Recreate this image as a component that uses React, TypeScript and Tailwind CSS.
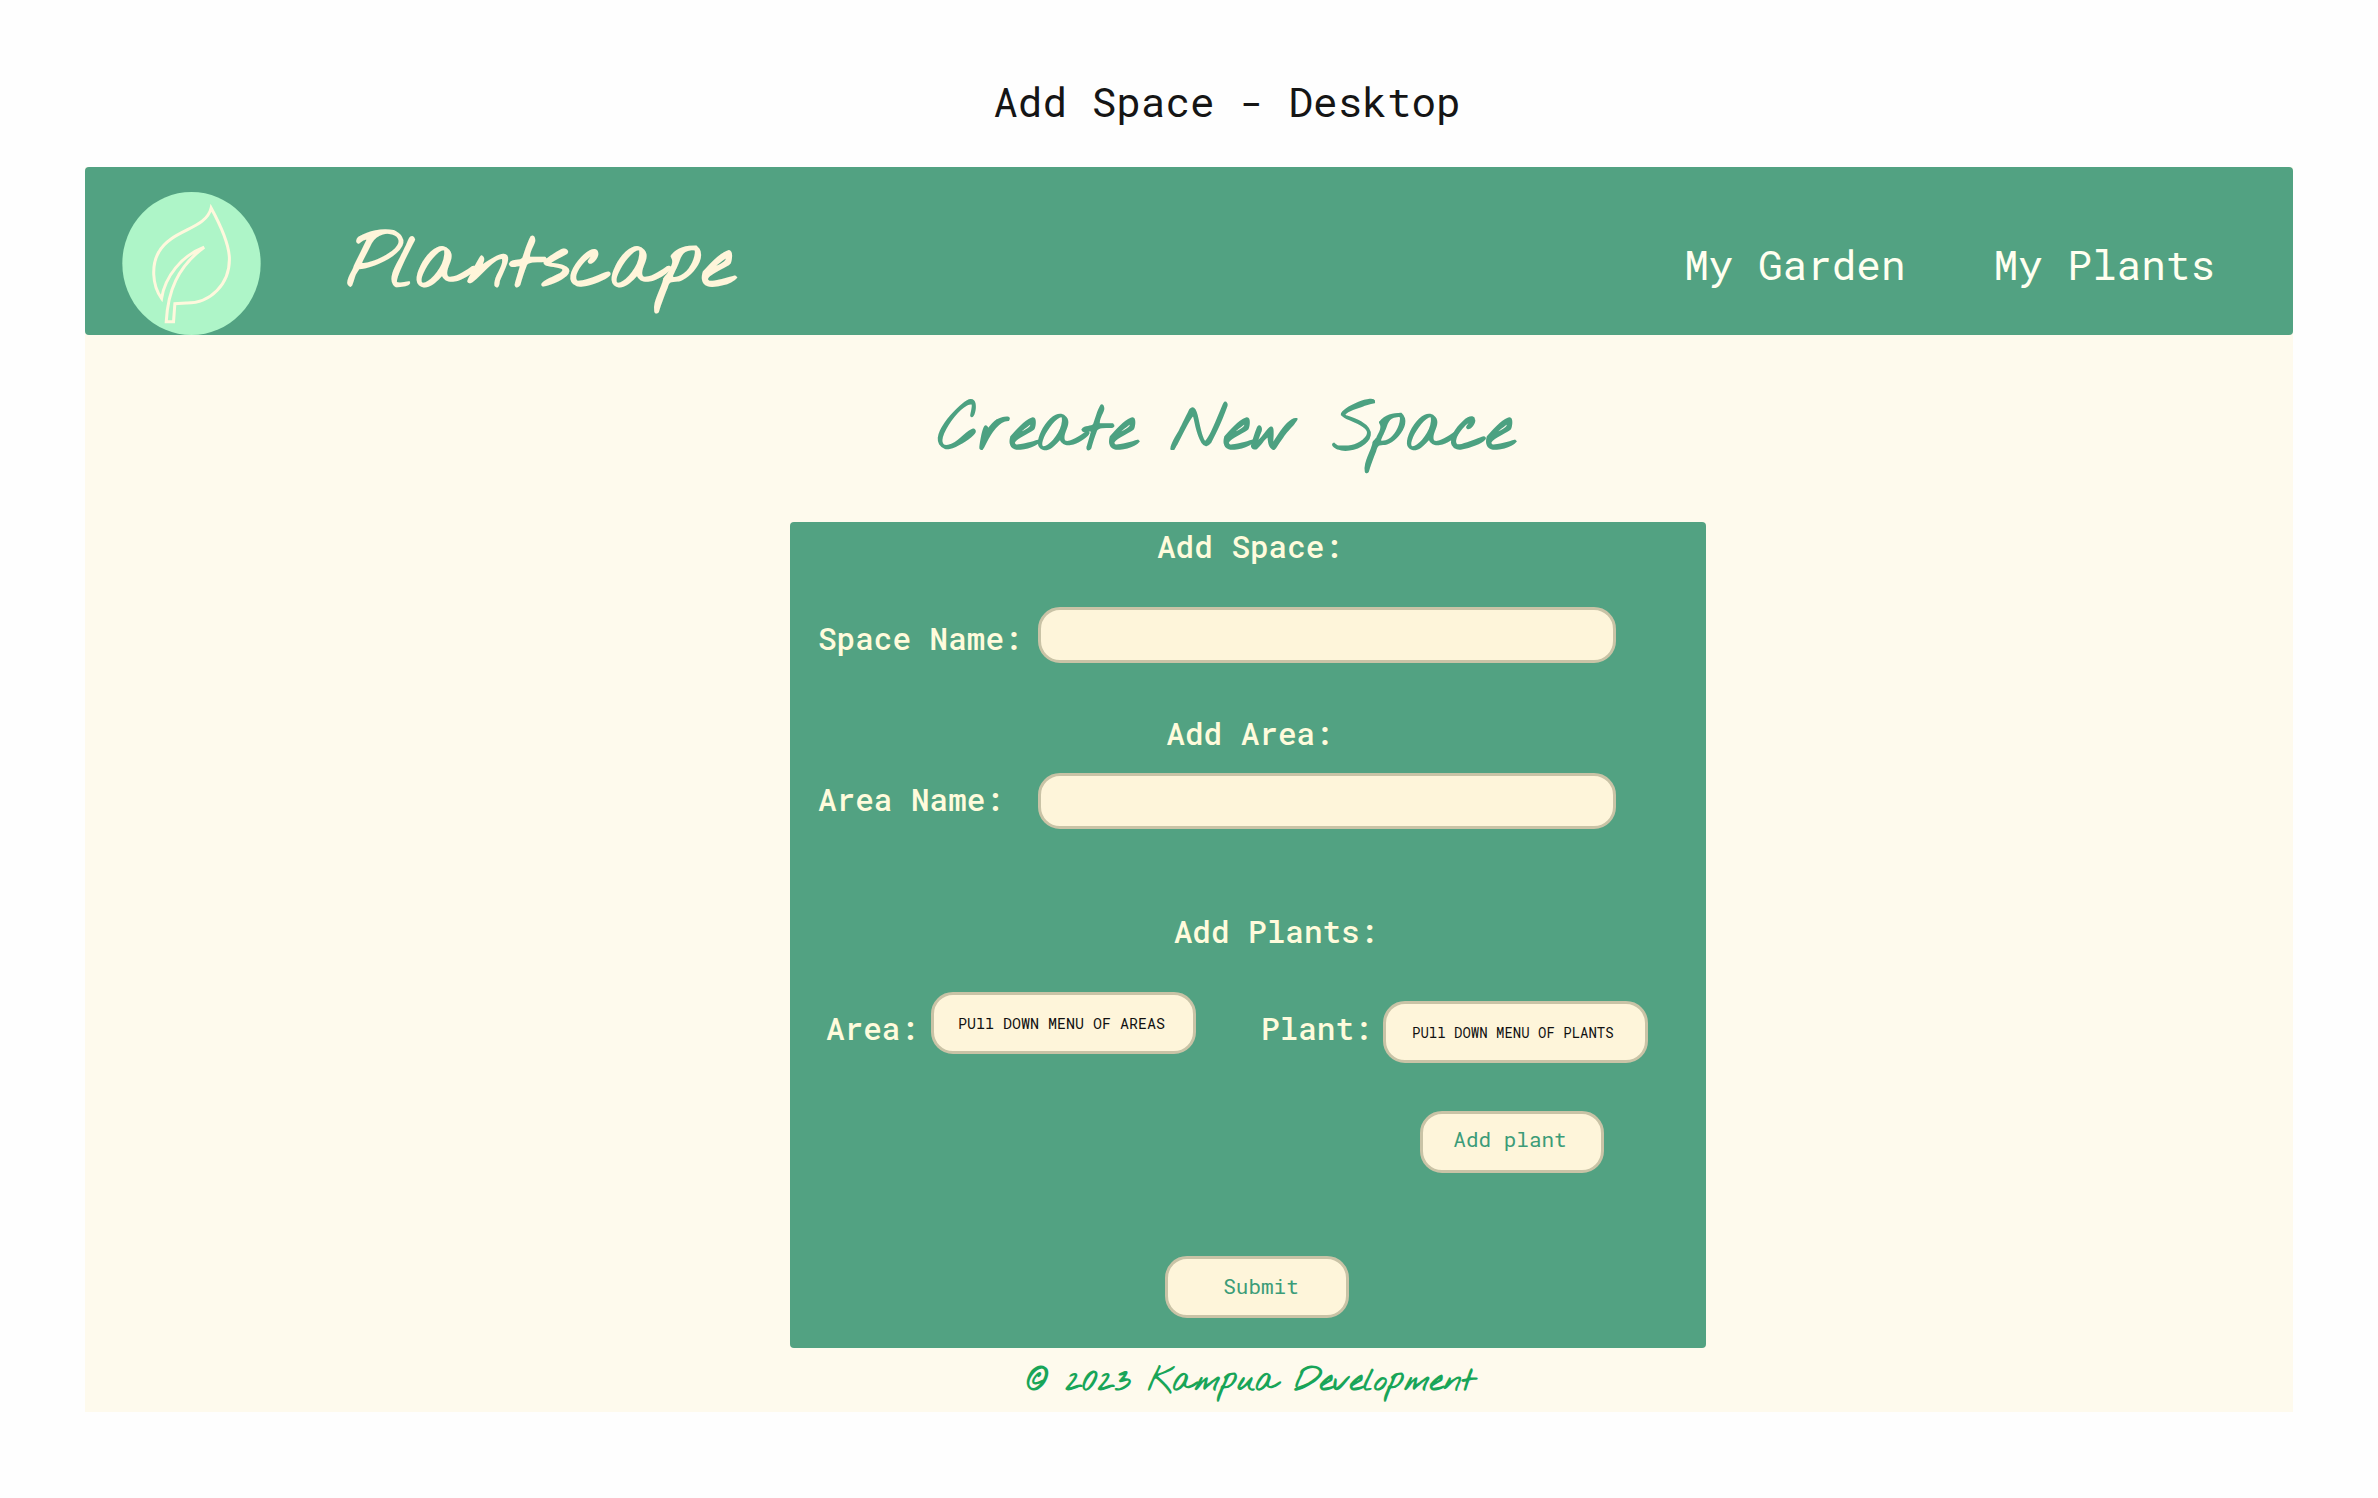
import React from "react";

const mono = "font-['Roboto_Mono','DejaVu_Sans_Mono',monospace]";
const script = "font-['Nothing_You_Could_Do','Caveat','Lato',cursive]";
const field = "rounded-[22px] border-3 border-[#c9c3a6] bg-[#fef5da]";
const label = "shrink-0 text-[31px] leading-9 font-medium";

function Logo() {
  return (
    <svg viewBox="36 36 416 430" className="h-[143px] w-[139px] shrink-0" role="img" aria-label="Leaf logo">
      <ellipse cx="244" cy="251" rx="208" ry="215" fill="#aef5c8" />
      <path
        d="M303 84C327 128 358 188 358 238C358 312 302 371 228 370L194 372L190 426L168 426C173 335 201 262 282 202C214 227 164 291 154 356C124 315 124 252 146 216C184 148 288 149 303 84Z"
        fill="none"
        stroke="#fff8dd"
        strokeWidth="9"
      />
    </svg>
  );
}

function TextRow({ id, text, labelPad }: { id: string; text: string; labelPad: string }) {
  return (
    <div className="flex items-center pr-[90px] pl-7">
      <label htmlFor={id} className={`${label} w-[220px] ${labelPad}`}>
        {text}
      </label>
      <input id={id} type="text" className={`${field} h-14 min-w-0 flex-1 px-5 text-xl text-[#111]`} />
    </div>
  );
}

export default function App() {
  return (
    <div className={`${mono} min-h-screen bg-[#fefefe] px-[85px] pb-[86px]`}>
      <h2 className="pt-[75px] pb-10 pl-[76px] text-center text-[41px] leading-[52px] text-[#151515]">
        Add Space - Desktop
      </h2>
      <div className="bg-[#fefaed]">
        <header className="flex h-[168px] items-end rounded bg-[#52a282] pr-[78px] pl-[37px]">
          <Logo />
          <span className={`${script} mb-[25px] ml-[86px] text-[75px] leading-[88px] font-bold text-[#fff5da]`}>
            Plantscape
          </span>
          <nav className="mb-[45px] ml-auto flex gap-[88px] text-[41px] leading-[52px] text-[#fffff0]">
            <a href="#garden">My Garden</a>
            <a href="#plants">My Plants</a>
          </nav>
        </header>
        <main>
          <h1 className={`${script} pt-[53px] pb-[46px] pl-[74px] text-center text-[65px] leading-[88px] font-bold text-[#4ca181]`}>
            Create New Space
          </h1>
          <div className="pl-[118px]">
            <form
              onSubmit={(e) => e.preventDefault()}
              className="mx-auto flex w-[916px] max-w-full flex-col rounded bg-[#52a282] pt-[6px] pb-[30px] text-[#fffbdc]"
            >
              <h3 className={`${label} mb-[43px] pl-1 text-center`}>Add Space:</h3>
              <TextRow id="space-name" text="Space Name:" labelPad="pt-[6px]" />
              <h3 className={`${label} mt-[52px] mb-[22px] pl-1 text-center`}>Add Area:</h3>
              <TextRow id="area-name" text="Area Name:" labelPad="pb-1" />
              <h3 className={`${label} mt-[84px] mb-[43px] pl-14 text-center`}>Add Plants:</h3>
              <div className="flex items-start justify-between pr-[58px] pl-9">
                <div className="flex">
                  <label htmlFor="area" className={`${label} w-[105px] pt-[18px]`}>Area:</label>
                  <select id="area" className={`${field} h-[62px] w-[265px] appearance-none px-6 text-[15px] text-[#111]`}>
                    <option>PUll DOWN MENU OF AREAS</option>
                  </select>
                </div>
                <div className="flex pt-[9px]">
                  <label htmlFor="plant" className={`${label} w-[122px] pt-[9px]`}>Plant:</label>
                  <select id="plant" className={`${field} h-[62px] w-[265px] appearance-none px-[26px] text-[14px] text-[#111]`}>
                    <option>PUll DOWN MENU OF PLANTS</option>
                  </select>
                </div>
              </div>
              <div className="mt-12 flex justify-end pr-[102px]">
                <button type="button" className={`${field} h-[62px] w-[184px] pr-1 pb-1 text-[21px] text-[#3c9c78]`}>
                  Add plant
                </button>
              </div>
              <div className="mt-[83px] flex justify-center pl-[18px]">
                <button type="submit" className={`${field} h-[62px] w-[184px] pl-2 text-[21px] text-[#3c9c78]`}>
                  Submit
                </button>
              </div>
            </form>
          </div>
        </main>
        <footer className={`${script} pt-[10px] pb-[6px] pl-[124px] text-center text-[32px] leading-[48px] font-bold text-[#18a558]`}>
          © 2023 Kampua Development
        </footer>
      </div>
    </div>
  );
}
